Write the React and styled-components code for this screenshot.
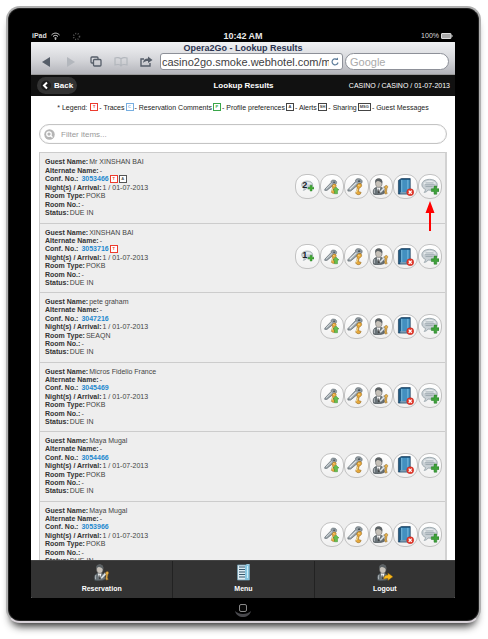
import React from "react";
import styled, { createGlobalStyle } from "styled-components";

const GlobalStyle = createGlobalStyle`
  * { box-sizing: border-box; }
  body {
    margin: 0;
    background: #fff;
    font-family: "Liberation Sans", Arial, sans-serif;
  }
  button, input { font-family: inherit; }
`;

const Page = styled.div`
  display: flex;
  height: 100vh;
  padding: 6px 7px 16px 6px;
  overflow: hidden;
`;

const Tablet = styled.div`
  flex: 1;
  min-width: 0;
  display: flex;
  flex-direction: column;
  padding: 22px 24px 0 23px;
  background: #000;
  border: 2px solid #b0b0b0;
  border-bottom-color: #d8d2d8;
  border-radius: 14px;
  box-shadow: inset 0 0 0 1px #222, 0 8px 8px -5px #222;
`;

const StatusBar = styled.div`
  display: grid;
  grid-template-columns: 1fr auto 1fr;
  align-items: center;
  height: 12px;
  color: #ddd;
  line-height: 12px;
`;

const StatusGroup = styled.div`
  display: flex;
  align-items: center;
  gap: ${(p) => (p.$end ? "2px" : "4px")};
  justify-content: ${(p) => (p.$end ? "flex-end" : "flex-start")};
  padding: 0 2px 0 1px;
  font-size: 7px;
  font-weight: ${(p) => (p.$end ? "normal" : "bold")};
`;

const Clock = styled.time`
  font-size: 9px;
  font-weight: bold;
  color: #e8e8e8;
`;

const Screen = styled.div`
  flex: 1;
  min-height: 0;
  display: flex;
  flex-direction: column;
  overflow: hidden;
  background: #fff;
  border-radius: 1px;
`;

const Browser = styled.div`
  flex: none;
  height: 33px;
  background: linear-gradient(#f1f2f4, #d5d6da 55%, #b3b4ba);
  border-bottom: 1px solid #999;
`;

const PageTitle = styled.div`
  height: 11px;
  line-height: 12px;
  font-size: 9px;
  font-weight: bold;
  text-align: center;
  color: #2b3350;
`;

const BrowserTools = styled.div`
  display: flex;
  align-items: center;
  padding: 0 6px 0 8px;
`;

const ToolButton = styled.button`
  display: flex;
  align-items: center;
  justify-content: center;
  flex: none;
  width: 14px;
  height: 17px;
  margin-right: 11px;
  padding: 0;
  border: 0;
  background: none;
  color: ${(p) => (p.disabled ? "#b3b7bd" : "#565e69")};
`;

const Address = styled.div`
  display: flex;
  align-items: center;
  flex: 1;
  min-width: 0;
  height: 17px;
  margin-left: -4px;
  margin-right: 2px;
  padding: 0 3px 0 1px;
  background: #fff;
  border: 1px solid #8d9098;
  border-radius: 3px;
`;

const AddressInput = styled.input`
  flex: 1;
  min-width: 0;
  height: 15px;
  padding: 0;
  border: 0;
  outline: 0;
  background: none;
  color: #3e3e42;
  font-size: 11px;
`;

const Reload = styled.button`
  display: flex;
  padding: 0;
  margin-left: 2px;
  border: 0;
  background: none;
  color: #5f7e9c;
`;

const GoogleInput = styled.input`
  flex: 0 1 104px;
  min-width: 0;
  height: 17px;
  padding: 0 4px;
  border: 1px solid #8d9098;
  border-radius: 9px;
  outline: 0;
  background: #fff;
  font-size: 11px;
  &::placeholder { color: #aaa; opacity: 1; }
`;

const Header = styled.header`
  flex: none;
  display: grid;
  grid-template-columns: 1fr auto 1fr;
  align-items: center;
  height: 21px;
  padding: 0 5px 0 6px;
  background: #111;
  color: #fff;
`;

const Back = styled.button`
  display: flex;
  align-items: center;
  gap: 3px;
  justify-self: start;
  height: 17px;
  padding: 0 4px;
  border: 0;
  border-radius: 9px;
  background: #333;
  color: #fff;
  font-size: 8px;
  font-weight: bold;
`;

const Heading = styled.h1`
  margin: 0;
  font-size: 8px;
  line-height: 10px;
`;

const Location = styled.div`
  text-align: right;
  font-size: 7px;
  white-space: nowrap;
`;

const Content = styled.main`
  flex: 1;
  min-height: 0;
  overflow: hidden;
  padding: 6px 8px 0;
`;

const Legend = styled.div`
  display: flex;
  justify-content: center;
  align-items: center;
  gap: 1px;
  height: 10px;
  white-space: nowrap;
  color: #222;
  font-size: 7px;
`;

const Mark = styled.span`
  display: inline-flex;
  align-items: center;
  justify-content: center;
  min-width: 8px;
  height: 8px;
  padding: 0 1px;
  border: 1px solid ${(p) => p.$color};
  background: #fff;
  color: ${(p) => p.$color};
  font-size: 4px;
  font-weight: bold;
  line-height: 6px;
`;

const Filter = styled.label`
  display: flex;
  align-items: center;
  gap: 6px;
  height: 20px;
  margin: 12px 0 8px;
  padding: 0 4px;
  border: 1px solid #c4c4c4;
  border-radius: 10px;
  box-shadow: inset 0 0 1px #ccc;
`;

const FilterInput = styled.input`
  flex: 1;
  min-width: 0;
  padding: 0;
  border: 0;
  outline: 0;
  background: none;
  font-size: 8px;
  &::placeholder { color: #999; opacity: 1; }
`;

const GuestList = styled.ul`
  display: grid;
  grid-auto-rows: 1fr;
  min-height: 419px;
  margin: 0;
  padding: 0;
  list-style: none;
  border: 1px solid #ccc;
  border-right: 2px solid #d2d2d2;
`;

const GuestRow = styled.li`
  display: flex;
  justify-content: space-between;
  align-items: center;
  padding: 5px 3px 5px 5px;
  background: #eee;
  & + & { border-top: 1px solid #ccc; }
`;

const Fields = styled.dl`
  display: flex;
  flex-direction: column;
  justify-content: space-between;
  align-self: stretch;
  margin: 0;
  color: #444;
  font-size: 7px;
  line-height: 8px;
  white-space: nowrap;
`;

const Field = styled.div`
  display: flex;
  align-items: center;
  gap: 1px;
  height: 8px;
`;

const Term = styled.dt`
  color: #333;
  font-weight: bold;
`;

const Value = styled.dd`
  display: flex;
  gap: 1px;
  margin: 0;
`;

const ConfLink = styled.a`
  margin-left: 2px;
  color: #2489ce;
  font-weight: bold;
  text-decoration: none;
`;

const Actions = styled.div`
  display: grid;
  grid-template-columns: repeat(6, 1fr);
  width: 147px;
  margin-bottom: 2px;
`;

const Action = styled.button`
  position: relative;
  display: flex;
  align-items: center;
  justify-content: center;
  grid-column: ${(p) => p.$column};
  height: 25px;
  padding: 0;
  border: 1px solid #c2c2c2;
  border-radius: 11px;
  background: linear-gradient(#fff, #f0f0f0);
  color: #222;
`;

const Pointer = styled.span`
  position: absolute;
  top: 26px;
  left: 50%;
  display: flex;
  transform: translateX(-50%);
`;

const Footer = styled.nav`
  flex: none;
  display: grid;
  grid-template-columns: repeat(3, 1fr);
  height: 38px;
  border-top: 1px solid #444;
  background: #333;
`;

const FooterButton = styled.button`
  display: flex;
  flex-direction: column;
  align-items: center;
  justify-content: space-between;
  padding: 3px 0 4px;
  border: 0;
  background: none;
  color: #fff;
  font-size: 7px;
  font-weight: bold;
  line-height: 10px;
  & + & { border-left: 1px solid #222; }
`;

const HomeArea = styled.div`
  flex: none;
  display: flex;
  justify-content: center;
  align-items: center;
  height: 23px;
`;

const HomeButton = styled.button`
  display: flex;
  padding: 0;
  border: 0;
  background: none;
`;

const Wifi = () => (
  <svg width="9" height="8" viewBox="0 0 18 16" fill="none" stroke="#ddd" strokeWidth="2">
    <path d="M1 6c5-5 11-5 16 0M4 9c3-3 7-3 10 0M7 12c1-1 3-1 4 0" />
    <circle cx="9" cy="14" r="1" />
  </svg>
);

const Spinner = () => (
  <svg width="17" height="9" viewBox="-16 0 34 18" fill="none" stroke="#555" strokeWidth="3" strokeDasharray="2 3">
    <circle cx="9" cy="9" r="6" />
  </svg>
);

const Battery = () => (
  <svg width="12" height="6" viewBox="0 0 24 12">
    <rect x="1" y="1" width="19" height="10" rx="1" fill="#aaa" stroke="#ddd" strokeWidth="2" />
    <path d="M22 4v4" stroke="#ccc" strokeWidth="2" />
  </svg>
);

const Triangle = ({ right }) => (
  <svg width="10" height="10" viewBox="0 0 10 10" fill="currentColor">
    <path d={right ? "M1 0l8 5-8 5z" : "M9 0L1 5l8 5z"} />
  </svg>
);

const Tabs = () => (
  <svg width="12" height="11" viewBox="0 0 12 11" fill="none" stroke="currentColor" strokeWidth="1.3">
    <path d="M3 7H2a1 1 0 0 1-1-1V2a1 1 0 0 1 1-1h5a1 1 0 0 1 1 1v1" />
    <rect x="3.5" y="3.5" width="7.5" height="6.5" rx="1" />
  </svg>
);

const Bookmarks = () => (
  <svg width="14" height="10" viewBox="0 0 14 10" fill="none" stroke="currentColor" strokeWidth="1.2">
    <path d="M7 2C6 .5 2.500.3 1 1v7c2-.7 5-.5 6 1 1-1.500 4-1.700 6-1V1c-1.500-.7-5-.5-6 1zM7 2v7" />
  </svg>
);

const Share = () => (
  <svg width="13" height="11" viewBox="0 0 13 11">
    <path d="M4 3H1v7h9V7" fill="none" stroke="currentColor" strokeWidth="1.4" />
    <path d="M3 7c.3-3.200 2-4.500 5-4.500V.5L12.500 4 8 7V5C6 5 4.500 5.500 3 7z" fill="currentColor" />
  </svg>
);

const ReloadIcon = () => (
  <svg width="8" height="9" viewBox="0 0 8 9" fill="none" stroke="currentColor" strokeWidth="1.2">
    <path d="M6 2.500A3 3 0 1 0 7 5.500" />
    <path d="M4 3h3V.5z" fill="currentColor" stroke="none" />
  </svg>
);

const BackIcon = () => (
  <svg width="10" height="11" viewBox="0 0 10 11">
    <circle cx="5" cy="5.500" r="5" fill="#1c1c1c" />
    <path d="M6 2.500l-3 3 3 3" fill="none" stroke="#fff" strokeWidth="2" />
  </svg>
);

const SearchIcon = () => (
  <svg width="11" height="11" viewBox="0 0 22 22">
    <circle cx="11" cy="11" r="10.500" fill="#b5b5b5" />
    <circle cx="10" cy="10" r="4.500" fill="none" stroke="#fff" strokeWidth="2.500" />
    <path d="M13 13l4 4" stroke="#fff" strokeWidth="2.500" />
  </svg>
);

const Bubble = () => (
  <g>
    <path d="M9.500 1.500c5 0 8.500 2.400 8.500 6s-3.500 6-8 6c-.8 0-1.400 0-2-.2-1 1.500-2.500 2.500-4.500 2.700 1-1 1.500-2.200 1.400-3.400C2.300 11.500 1 9.700 1 7.500c0-3.600 3.500-6 8.500-6z" fill="#c9d0d5" stroke="#9aa6ac" />
    <path d="M3 7c0-2.500 3-4 7-4 3.500 0 6 1.500 6.500 3.500z" fill="#e7ebed" />
  </g>
);

const MessageIcon = () => (
  <svg width="18" height="18" viewBox="0 0 20 20">
    <Bubble />
    <path d="M5 5.500h9M4.500 7.500h10.500M5 9.500h8" stroke="#9aa6ad" />
    <path d="M11.500 12h3V9h3v3h2.500v3h-2.500v3h-3v-3h-3z" fill="#3fa23a" stroke="#237b27" strokeWidth=".6" />
  </svg>
);

const CountIcon = ({ count }) => (
  <svg width="13" height="13" viewBox="0 0 20 20">
    <Bubble />
    <text x="2" y="13" fontSize="14" fontWeight="bold" fill="#17212b">{count}</text>
    <path d="M11 11h3V8h3v3h3v3h-3v3h-3v-3h-3z" fill="#43aa32" stroke="#237b27" strokeWidth=".6" />
  </svg>
);

const Keys = () => (
  <g>
    <path d="M1 13L9.500 4c-.5-2 1-3.500 3.500-3.200 2.500.2 4 1.600 3.800 3.400-.2 1.900-2 3-4 3L4 14.500H1z" fill="#98a2a8" stroke="#59646b" strokeWidth=".8" />
    <path d="M3 12.500l7.500-7" stroke="#e3e8ea" strokeWidth="1.200" />
    <ellipse cx="13.500" cy="3.500" rx="1.500" ry="1" fill="#4c5860" />
    <path d="M15.500 6.500c1.700 1.500.3 4.500-2 4.500l-.8 4 3 1-1 2-2.500.7-2.500-1.700 1.800-6c-2-2.500 1-6 4-4.500z" fill="#e7a93b" stroke="#9a6a1c" strokeWidth=".7" />
    <path d="M12.500 8l1.500.7M11.500 12l-1 4" stroke="#fff2b5" strokeWidth="1" />
  </g>
);

const KeysIcon = () => <svg width="18" height="18" viewBox="0 0 20 20"><Keys /></svg>;

const KeysUpIcon = () => (
  <svg width="15" height="16" viewBox="0 0 20 20">
    <Keys />
    <path d="M16 10l4 4h-2v5h-4v-5h-2z" fill="#68bd4b" stroke="#328c27" strokeWidth=".6" />
  </svg>
);

const Person = () => (
  <g>
    <path d="M2 19c-1.500-5 .5-7.500 4-8h4c3.500.5 4.500 3 4.500 7-3 1.800-9 2-12.500 1z" fill="#697277" stroke="#444b50" strokeWidth=".8" />
    <path d="M5.500 11l2.500 7 2-7z" fill="#fafafa" />
    <path d="M8 12l1 5-1 1-1-1z" fill="#333" />
    <path d="M3.500 13c-1 1-.7 3-.5 5" stroke="#bac1c5" fill="none" />
    <ellipse cx="8" cy="6" rx="3.800" ry="5" fill="#c6c1b9" stroke="#666" strokeWidth=".7" />
    <path d="M4 6C3 2 5 .4 8 .5c3.500 0 5 2.500 3.800 6C11 4.500 8.500 4 7 3.500 5 3.500 5 5 4 6z" fill="#5b6164" />
  </g>
);

const PersonKeysIcon = () => (
  <svg width="17" height="17" viewBox="0 0 20 20">
    <Person />
    <path d="M9 16l5-6 2 2-6 6z" fill="#dce2e5" stroke="#687279" strokeWidth=".6" />
    <path d="M16 9c2-1 3.500 1.500 1.500 3.500l-.5 4 1 1.500-2 1-1-1.500.5-5c-1-1-1-3 .5-3.500z" fill="#e6b14b" stroke="#886021" strokeWidth=".6" />
  </svg>
);

const LogoutIcon = () => (
  <svg width="17" height="17" viewBox="0 0 20 20">
    <Person />
    <path d="M9 18c0-4 2-5 5-5v-2.500l6 4.500-6 4.500V17c-2 0-3 .2-5 1z" fill="#f8b719" stroke="#7d5816" strokeWidth=".6" />
  </svg>
);

const BookIcon = () => (
  <svg width="17" height="18" viewBox="0 0 18 19">
    <path d="M1.500 2.500L4.500.5H14v14l-3 2.500H1.500z" fill="#205b85" stroke="#173a58" strokeWidth=".7" />
    <path d="M4.500 2h9v13h-9z" fill="#4390c0" />
    <path d="M5 2v13M11.500 2v12" stroke="#7dbde0" />
    <path d="M3.500 15.800h8" stroke="#c2ced6" />
    <circle cx="14" cy="15" r="3.700" fill="#e63829" stroke="#b91e18" strokeWidth=".5" />
    <path d="M12.400 13.400l3.200 3.200m0-3.200l-3.200 3.200" stroke="#fff" strokeWidth="1.300" />
  </svg>
);

const MenuIcon = () => (
  <svg width="13" height="17" viewBox="0 0 13 17">
    <path d="M.5 1h9V0h3v16h-12z" fill="#dcecf4" stroke="#729caf" strokeWidth=".8" />
    <path d="M8 1l4-.5V16H8z" fill="#86c5df" />
    <path d="M2 3h6M2 5.500h6M2 8h6M2 10.500h6M2 13h6" stroke="#34576b" />
    <path d="M10.500 2v12" stroke="#cceefa" />
  </svg>
);

const Arrow = () => (
  <svg width="10" height="30" viewBox="0 0 10 30" fill="#f00">
    <path d="M5 0l4.500 12H6v18H4V12H.5z" />
  </svg>
);

const HomeIcon = () => (
  <svg width="18" height="16" viewBox="0 0 18 16">
    <path d="M1 9c4 4 12 4 16 0-2 8-14 8-16 0z" fill="#48484c" />
    <rect x="5.500" y="2.500" width="7" height="7" rx="1.500" fill="#080808" stroke="#888" />
  </svg>
);

const LEGEND = [
  ["T", "#ec3b2e", "Traces"],
  ["C", "#77aee0", "Reservation Comments"],
  ["P", "#3aa64a", "Profile preferences"],
  ["A", "#444", "Alerts"],
  ["SH", "#444", "Sharing"],
  ["MSG", "#444", "Guest Messages"],
];

const GUESTS = [
  { name: "Mr XINSHAN BAI", conf: "3053466", room: "POKB", marks: ["T", "A"], count: 2, pointed: true },
  { name: "XINSHAN BAI", conf: "3053716", room: "POKB", marks: ["T"], count: 1 },
  { name: "pete graham", conf: "3047216", room: "SEAQN" },
  { name: "Micros Fidelio France", conf: "3045469", room: "POKB" },
  { name: "Maya Mugal", conf: "3054466", room: "POKB" },
  { name: "Maya Mugal", conf: "3053966", room: "POKB" },
];

const ACTIONS = [
  ["Upgrade key", KeysUpIcon],
  ["Keys", KeysIcon],
  ["Guest keys", PersonKeysIcon],
  ["Cancel", BookIcon],
  ["Add message", MessageIcon],
];

function Guest({ guest }) {
  const fields = [
    ["Guest Name:", guest.name],
    ["Alternate Name:", "-"],
    ["Conf. No.:", null],
    ["Night(s) / Arrival:", "1 / 01-07-2013"],
    ["Room Type:", guest.room],
    ["Room No.:", "-"],
    ["Status:", "DUE IN"],
  ];
  return (
    <GuestRow>
      <Fields>
        {fields.map(([term, value]) => (
          <Field key={term}>
            <Term>{term}</Term>
            <Value>
              {value ?? (
                <>
                  <ConfLink href="#reservation">{guest.conf}</ConfLink>
                  {(guest.marks || []).map((m) => (
                    <Mark key={m} $color={m === "T" ? "#ec3b2e" : "#555"}>{m}</Mark>
                  ))}
                </>
              )}
            </Value>
          </Field>
        ))}
      </Fields>
      <Actions>
        {guest.count && (
          <Action $column={1} aria-label={`${guest.count} messages`}>
            <CountIcon count={guest.count} />
          </Action>
        )}
        {ACTIONS.map(([label, Icon], i) => (
          <Action key={label} $column={i + 2} aria-label={label}>
            <Icon />
            {guest.pointed && label === "Add message" && <Pointer><Arrow /></Pointer>}
          </Action>
        ))}
      </Actions>
    </GuestRow>
  );
}

export default function App() {
  return (
    <Page>
      <GlobalStyle />
      <Tablet>
        <StatusBar>
          <StatusGroup>
            <span>iPad</span>
            <Wifi />
            <Spinner />
          </StatusGroup>
          <Clock>10:42 AM</Clock>
          <StatusGroup $end>
            <span>100%</span>
            <Battery />
          </StatusGroup>
        </StatusBar>
        <Screen>
          <Browser>
            <PageTitle>Opera2Go - Lookup Results</PageTitle>
            <BrowserTools>
              <ToolButton aria-label="Previous page"><Triangle /></ToolButton>
              <ToolButton aria-label="Next page" disabled><Triangle right /></ToolButton>
              <ToolButton aria-label="Open pages"><Tabs /></ToolButton>
              <ToolButton aria-label="Bookmarks" disabled><Bookmarks /></ToolButton>
              <ToolButton aria-label="Share"><Share /></ToolButton>
              <Address>
                <AddressInput aria-label="Address" defaultValue="casino2go.smoke.webhotel.com/m" />
                <Reload aria-label="Reload"><ReloadIcon /></Reload>
              </Address>
              <GoogleInput aria-label="Search the web" placeholder="Google" />
            </BrowserTools>
          </Browser>
          <Header>
            <Back><BackIcon />Back</Back>
            <Heading>Lookup Results</Heading>
            <Location>CASINO / CASINO / 01-07-2013</Location>
          </Header>
          <Content>
            <Legend>
              <span>* Legend:&nbsp;</span>
              {LEGEND.map(([mark, color, text]) => (
                <React.Fragment key={mark}>
                  <Mark $color={color}>{mark}</Mark>
                  <span>- {text}</span>
                </React.Fragment>
              ))}
            </Legend>
            <Filter>
              <SearchIcon />
              <FilterInput aria-label="Filter items" placeholder="Filter items..." />
            </Filter>
            <GuestList>
              {GUESTS.map((guest) => <Guest key={guest.conf} guest={guest} />)}
            </GuestList>
          </Content>
          <Footer>
            <FooterButton><PersonKeysIcon />Reservation</FooterButton>
            <FooterButton><MenuIcon />Menu</FooterButton>
            <FooterButton><LogoutIcon />Logout</FooterButton>
          </Footer>
        </Screen>
        <HomeArea>
          <HomeButton aria-label="Home"><HomeIcon /></HomeButton>
        </HomeArea>
      </Tablet>
    </Page>
  );
}
